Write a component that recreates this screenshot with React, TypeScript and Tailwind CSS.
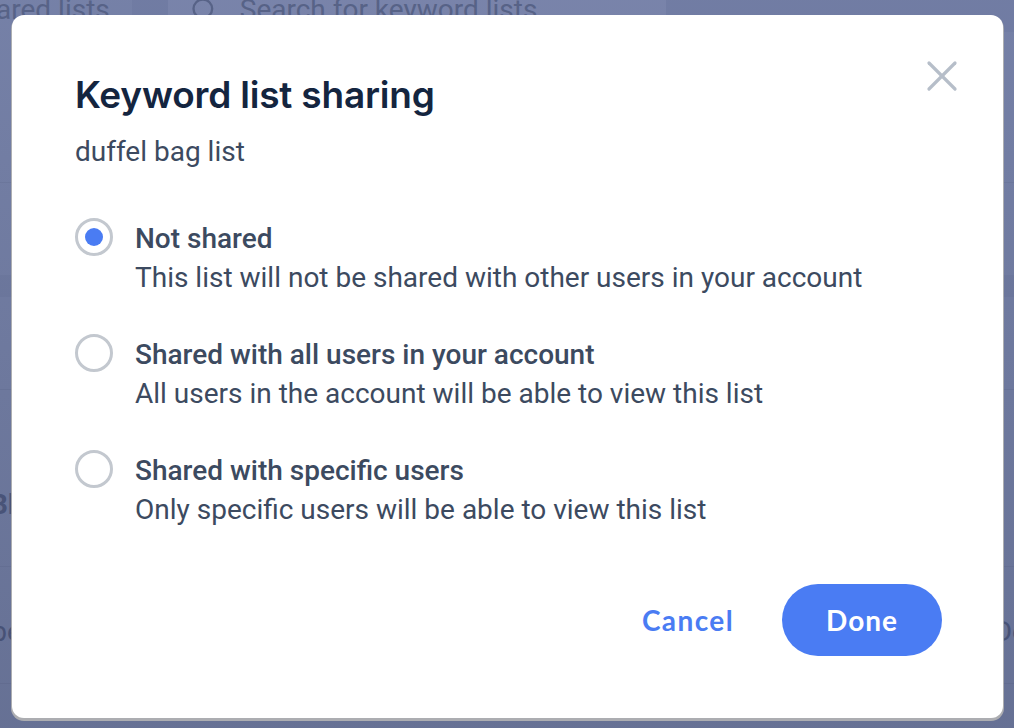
import { X, Search } from "lucide-react";

const options = [
  {
    id: "none",
    title: "Not shared",
    desc: "This list will not be shared with other users in your account",
  },
  {
    id: "all",
    title: "Shared with all users in your account",
    desc: "All users in the account will be able to view this list",
  },
  {
    id: "specific",
    title: "Shared with specific users",
    desc: "Only specific users will be able to view this list",
  },
];

function Radio({ checked }: { checked: boolean }) {
  return (
    <div className="mt-[-1px] flex h-[38px] w-[38px] shrink-0 items-center justify-center rounded-full border-[3px] border-[#c3c8cf] bg-white">
      {checked && <div className="h-[18px] w-[18px] rounded-full bg-[#4a7cf3]" />}
    </div>
  );
}

export default function App() {
  const selected = "none";

  return (
    <div
      className="relative h-[728px] w-full overflow-hidden bg-[#7580a6]"
      style={{ fontFamily: "Roboto, 'Noto Sans', sans-serif" }}
    >
      {/* page underneath the overlay */}
      <div className="flex flex-col text-[#4a5578]">
        <div className="-mt-[12px] flex h-[44px] items-center">
          <span className="-ml-[36px] text-[28px]">Shared lists</span>
          <div className="ml-[22px] h-full w-[36px] bg-[#6e79a0]" />
          <div className="flex h-full w-[498px] items-center gap-[22px] bg-[#7a84aa] pl-[22px]">
            <Search size={28} strokeWidth={2} />
            <span className="text-[28px]">Search for keyword lists</span>
          </div>
          <div className="h-full flex-1 bg-[#6f7aa1]" />
        </div>
        <div className="mt-[150px] h-[1px] bg-[#6c779c]" />
        <div className="mt-[92px] h-[22px] bg-[#6f7aa0]" />
        <div className="mt-[92px] h-[1px] bg-[#6c779c]" />
        <div className="mt-[94px] text-[28px] font-bold text-[#3f4a70]">
          <span className="-ml-[10px]">Bla</span>
        </div>
        <div className="mt-[40px] h-[1px] bg-[#6c779c]" />
        <div className="mt-[44px] flex justify-between text-[28px] text-[#3f4a70]">
          <span className="-ml-[24px]">abe</span>
          <span className="-mr-[14px]">Do</span>
        </div>
        <div className="mt-[30px] h-[1px] bg-[#6c779c]" />
      </div>

      {/* overlay */}
      <div className="absolute inset-0 bg-gradient-to-b from-[#7682aa]/30 to-[#505a7a]/40" />

      {/* modal */}
      <div className="absolute left-[12px] top-[15px] flex h-[703px] w-[991px] flex-col rounded-[12px] bg-white pl-[63px] pr-[61px] shadow-[0_2px_0_1px_rgba(180,180,180,0.9)]">
        <button className="absolute right-[35px] top-[35px] text-[#b6bec9]">
          <X size={52} strokeWidth={1.5} />
        </button>

        <h1
          className="mt-[58px] text-[37px] font-semibold leading-[44px] tracking-[-0.2px] text-[#14253f]"
          style={{ fontFamily: "Inter, 'Noto Sans', sans-serif" }}
        >
          Keyword list sharing
        </h1>
        <p className="mt-[19px] text-[28px] leading-[32px] text-[#3c4a60]">duffel bag list</p>

        <div className="mt-[51px] flex flex-col gap-[38px]">
          {options.map((o) => (
            <div key={o.id} className="flex gap-[22px]">
              <Radio checked={o.id === selected} />
              <div className="flex flex-col">
                <span className="text-[28px] font-medium leading-[39px] text-[#3c4a60]">{o.title}</span>
                <span className="text-[28px] leading-[39px] text-[#3c4a60]">{o.desc}</span>
              </div>
            </div>
          ))}
        </div>

        <div
          className="mt-[55px] flex items-center justify-end gap-[48px]"
          style={{ fontFamily: "Lato, 'Noto Sans', sans-serif" }}
        >
          <button className="text-[28px] font-bold tracking-[1.4px] text-[#4a7cf3]">Cancel</button>
          <button className="h-[72px] w-[160px] rounded-full bg-[#4a7cf3] text-[28px] font-bold tracking-[1px] text-white">
            Done
          </button>
        </div>
      </div>
    </div>
  );
}
